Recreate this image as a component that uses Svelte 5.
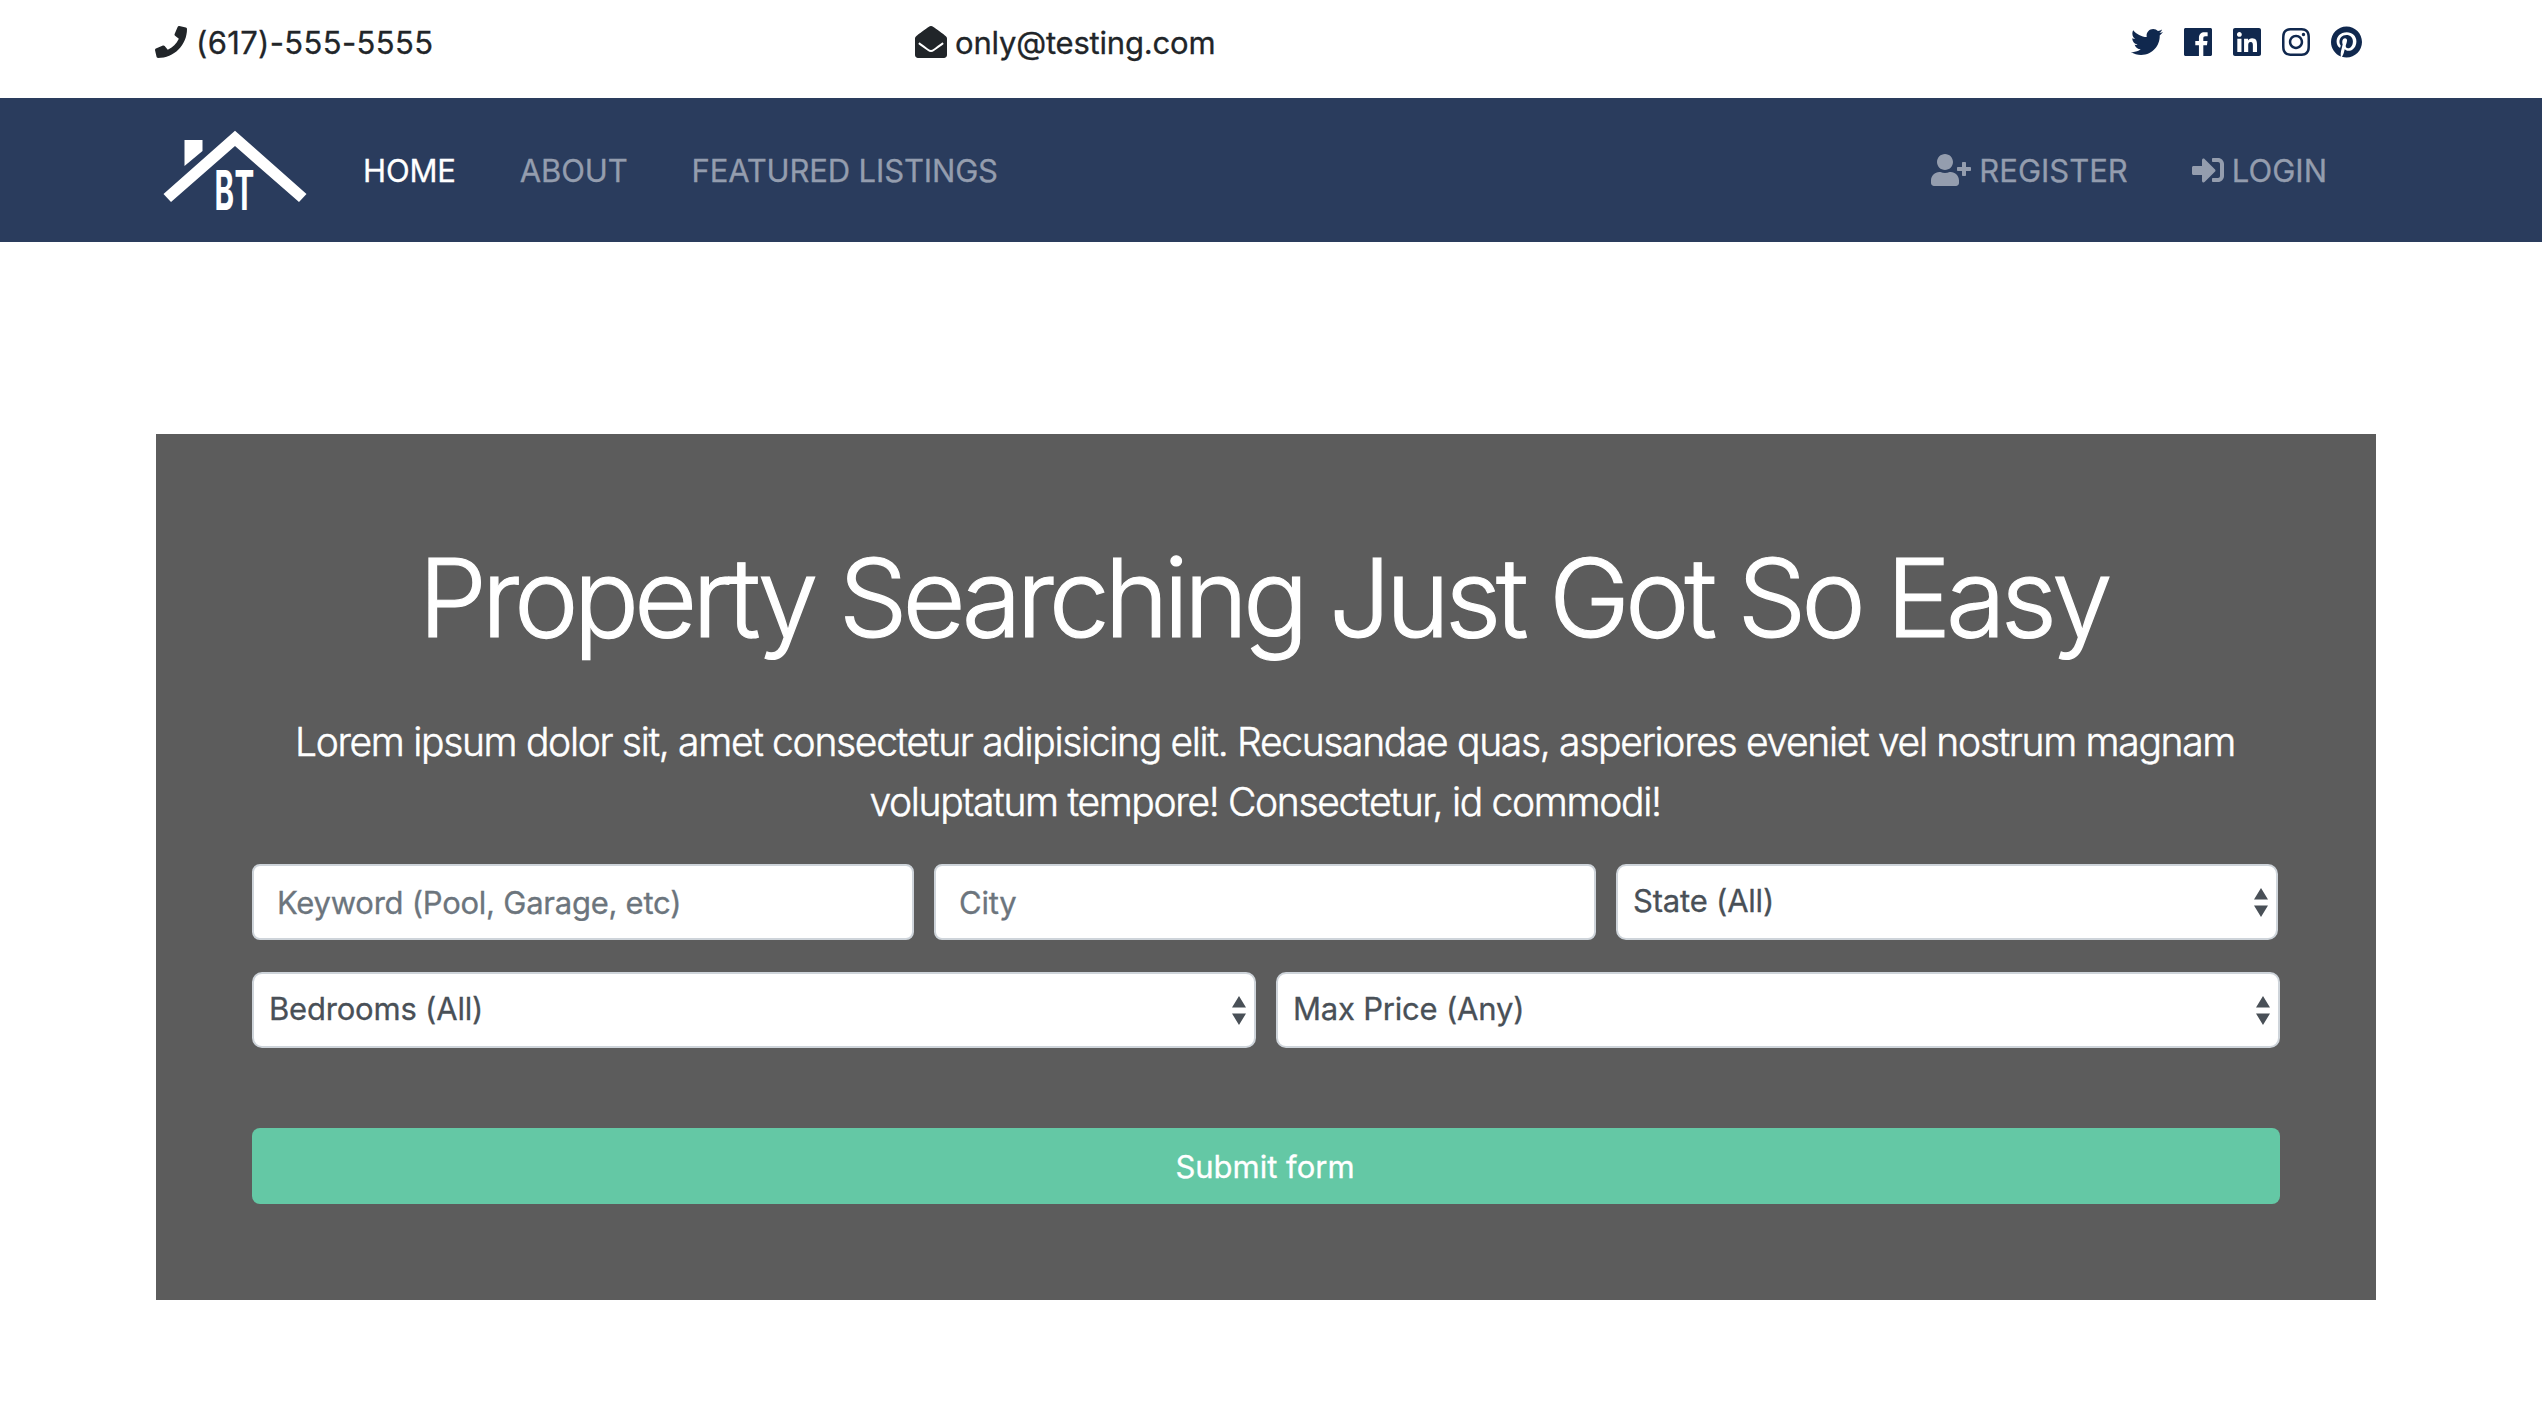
<script>
  const icons = {
    phone: { w: 512, d: 'M493.4 24.6l-104-24c-11.3-2.6-22.9 3.3-27.5 13.9l-48 112c-4.2 9.8-1.4 21.3 6.9 28l60.6 49.6c-36 76.7-98.9 140.5-177.2 177.2l-49.6-60.6c-6.8-8.3-18.2-11.1-28-6.9l-112 48C3.9 366.5-2 378.1.6 389.4l24 104C27.1 504.2 36.7 512 48 512c256.1 0 464-207.5 464-464 0-11.2-7.7-20.9-18.6-23.4z' },
    envelope: { w: 512, d: 'M512 464c0 26.51-21.49 48-48 48H48c-26.51 0-48-21.49-48-48V200.724a48 48 0 0 1 18.387-37.776c24.913-19.529 45.501-35.365 164.2-121.511C199.412 29.17 232.797-.347 256 .003c23.198-.354 56.596 29.172 73.413 41.433 118.687 86.137 139.303 101.995 164.2 121.512A48 48 0 0 1 512 200.724V464zm-65.666-196.605c-2.563-3.728-7.7-4.595-11.339-1.907-22.845 16.873-55.462 40.705-105.582 77.079-16.825 12.266-50.21 41.781-73.413 41.43-23.211.344-56.559-29.143-73.413-41.43-50.114-36.37-82.734-60.204-105.582-77.079-3.639-2.688-8.776-1.821-11.339 1.907l-9.072 13.196a7.998 7.998 0 0 0 1.839 10.967c22.887 16.899 55.454 40.69 105.303 76.868 20.274 14.781 56.524 47.813 92.264 47.573 35.724.242 71.961-32.771 92.263-47.573 49.85-36.179 82.418-59.97 105.303-76.868a7.998 7.998 0 0 0 1.839-10.967l-9.071-13.196z' },
    userPlus: { w: 640, d: 'M624 208h-64v-64c0-8.8-7.2-16-16-16h-32c-8.8 0-16 7.2-16 16v64h-64c-8.8 0-16 7.2-16 16v32c0 8.8 7.2 16 16 16h64v64c0 8.8 7.2 16 16 16h32c8.8 0 16-7.2 16-16v-64h64c8.8 0 16-7.2 16-16v-32c0-8.8-7.2-16-16-16zm-400 48c70.7 0 128-57.3 128-128S294.7 0 224 0 96 57.3 96 128s57.3 128 128 128zm89.6 32h-16.7c-22.2 10.2-46.9 16-72.9 16s-50.6-5.8-72.9-16h-16.7C60.2 288 0 348.2 0 422.4V464c0 26.5 21.5 48 48 48h352c26.5 0 48-21.5 48-48v-41.6c0-74.2-60.2-134.4-134.4-134.4z' },
    signIn: { w: 512, d: 'M416 448h-84c-6.6 0-12-5.4-12-12v-40c0-6.6 5.4-12 12-12h84c17.7 0 32-14.3 32-32V160c0-17.7-14.3-32-32-32h-84c-6.6 0-12-5.4-12-12V76c0-6.6 5.4-12 12-12h84c53 0 96 43 96 96v192c0 53-43 96-96 96zm-47-201L201 79c-15-15-41-4.5-41 17v96H24c-13.3 0-24 10.7-24 24v96c0 13.3 10.7 24 24 24h136v96c0 21.5 26 32 41 17l168-168c9.3-9.4 9.3-24.6 0-34z' }
  };

  const socials = [
    { name: 'Twitter', w: 512, d: 'M459.37 151.716c.325 4.548.325 9.097.325 13.645 0 138.72-105.583 298.558-298.558 298.558-59.452 0-114.68-17.219-161.137-47.106 8.447.974 16.568 1.299 25.34 1.299 49.055 0 94.213-16.568 130.274-44.832-46.132-.975-84.792-31.188-98.112-72.772 6.498.974 12.995 1.624 19.818 1.624 9.421 0 18.843-1.3 27.614-3.573-48.081-9.747-84.143-51.98-84.143-102.985v-1.299c13.969 7.797 30.214 12.67 47.431 13.319-28.264-18.843-46.781-51.005-46.781-87.391 0-19.492 5.197-37.36 14.294-52.954 51.655 63.675 129.3 105.258 216.365 109.807-1.624-7.797-2.599-15.918-2.599-24.04 0-57.828 46.782-104.934 104.934-104.934 30.213 0 57.502 12.67 76.67 33.137 23.715-4.548 46.456-13.32 66.599-25.34-7.798 24.366-24.366 44.833-46.132 57.827 21.117-2.273 41.584-8.122 60.426-16.243-14.292 20.791-32.161 39.308-52.628 54.253z' },
    { name: 'Facebook', w: 448, d: 'M448 56.7v398.5c0 13.7-11.1 24.7-24.7 24.7H309.1V306.5h58.2l8.7-67.6h-67v-43.2c0-19.6 5.4-32.9 33.5-32.9h35.8v-60.5c-6.2-.8-27.4-2.7-52.2-2.7-51.6 0-87 31.5-87 89.4v49.9h-58.4v67.6h58.4V480H24.7C11.1 480 0 468.9 0 455.3V56.7C0 43.1 11.1 32 24.7 32h398.5c13.7 0 24.8 11.1 24.8 24.7z' },
    { name: 'LinkedIn', w: 448, d: 'M416 32H31.9C14.3 32 0 46.5 0 64.3v383.4C0 465.5 14.3 480 31.9 480H416c17.6 0 32-14.5 32-32.3V64.3c0-17.8-14.4-32.3-32-32.3zM135.4 416H69V202.2h66.5V416zm-33.2-243c-21.3 0-38.5-17.3-38.5-38.5S80.9 96 102.2 96c21.2 0 38.5 17.3 38.5 38.5 0 21.3-17.2 38.5-38.5 38.5zm282.1 243h-66.4V312c0-24.8-.5-56.7-34.5-56.7-34.6 0-39.9 27-39.9 54.9V416h-66.4V202.2h63.7v29.2h.9c8.9-16.8 30.6-34.5 62.9-34.5 67.2 0 79.7 44.3 79.7 101.9V416z' },
    { name: 'Instagram', w: 448, d: 'M224.1 141c-63.6 0-114.9 51.3-114.9 114.9s51.3 114.9 114.9 114.9S339 319.5 339 255.9 287.7 141 224.1 141zm0 189.6c-41.1 0-74.7-33.5-74.7-74.7s33.5-74.7 74.7-74.7 74.7 33.5 74.7 74.7-33.6 74.7-74.7 74.7zm146.4-194.3c0 14.9-12 26.8-26.8 26.8-14.9 0-26.8-12-26.8-26.8s12-26.8 26.8-26.8 26.8 12 26.8 26.8zm76.1 27.2c-1.7-35.9-9.9-67.7-36.2-93.9-26.2-26.2-58-34.4-93.9-36.2-37-2.1-147.9-2.1-184.9 0-35.8 1.7-67.6 9.9-93.9 36.1s-34.4 58-36.2 93.9c-2.1 37-2.1 147.9 0 184.9 1.7 35.9 9.9 67.7 36.2 93.9s58 34.4 93.9 36.2c37 2.1 147.9 2.1 184.9 0 35.9-1.7 67.7-9.9 93.9-36.2 26.2-26.2 34.4-58 36.2-93.9 2.1-37 2.1-147.8 0-184.8zM398.8 388c-7.8 19.6-22.9 34.7-42.6 42.6-29.5 11.7-99.5 9-132.1 9s-102.7 2.6-132.1-9c-19.6-7.8-34.7-22.9-42.6-42.6-11.7-29.5-9-99.5-9-132.1s-2.6-102.7 9-132.1c7.8-19.6 22.9-34.7 42.6-42.6 29.5-11.7 99.5-9 132.1-9s102.7-2.6 132.1 9c19.6 7.8 34.7 22.9 42.6 42.6 11.7 29.5 9 99.5 9 132.1s2.7 102.7-9 132.1z' },
    { name: 'Pinterest', w: 496, d: 'M496 256c0 137-111 248-248 248-25.6 0-50.2-3.9-73.4-11.1 10.1-16.5 25.2-43.5 30.8-65 3-11.6 15.4-59 15.4-59 8.1 15.4 31.7 28.5 56.8 28.5 74.8 0 128.7-68.8 128.7-154.3 0-81.9-66.9-143.2-152.9-143.2-107 0-163.9 71.8-163.9 150.1 0 36.4 19.4 81.7 50.3 96.1 4.7 2.2 7.2 1.2 8.3-3.3.8-3.4 5-20.3 6.9-28.1.6-2.5.3-4.7-1.7-7.1-10.1-12.5-18.3-35.3-18.3-56.6 0-54.7 41.4-107.6 112-107.6 60.9 0 103.6 41.5 103.6 100.9 0 67.1-33.9 113.6-78 113.6-24.3 0-42.6-20.1-36.7-44.8 7-29.5 20.5-61.3 20.5-82.6 0-19-10.2-34.9-31.4-34.9-24.9 0-44.9 25.7-44.9 60.2 0 22 7.4 36.8 7.4 36.8s-24.5 103.8-29 123.2c-5 21.4-3 51.6-.9 71.2C65.4 450.9 0 361.1 0 256 0 119 111 8 248 8s248 111 248 248z' }
  ];
</script>

{#snippet icon(item)}
  <svg class="icon" width={item.w / 16} height="32" viewBox="0 0 {item.w} 512" aria-hidden="true"><path d={item.d} /></svg>
{/snippet}

{#snippet picker(label)}
  <button type="button" class="field select">
    <span>{label}</span>
    <svg width="14" height="29" viewBox="0 0 14 29" aria-hidden="true"><path d="M0 11.5L7 0l7 11.5zM0 17.5h14L7 29z" /></svg>
  </button>
{/snippet}

<header class="topbar">
  <div class="contact phone">{@render icon(icons.phone)}<span>(617)-555-5555</span></div>
  <div class="contact email">{@render icon(icons.envelope)}<span>only@testing.com</span></div>
  <div class="social">
    {#each socials as s (s.name)}
      <a href="#top" aria-label={s.name}>{@render icon(s)}</a>
    {/each}
  </div>
</header>

<nav class="navbar">
  <a class="brand" href="#top" aria-label="BT">
    <svg width="146" height="82" viewBox="0 0 146 82">
      <path d="M1.5 64L73 .8 144.500 64l-7.500 8L73 16 9 72z" />
      <path d="M22.500 10h18v11L22.500 36z" />
      <text x="52.500" y="80" textLength="42" lengthAdjust="spacingAndGlyphs">BT</text>
    </svg>
  </a>
  <a class="link home" href="#top">HOME</a>
  <a class="link about" href="#top">ABOUT</a>
  <a class="link listings" href="#top">FEATURED LISTINGS</a>
  <div class="account">
    <a class="link register" href="#top">{@render icon(icons.userPlus)}<span>REGISTER</span></a>
    <a class="link login" href="#top">{@render icon(icons.signIn)}<span>LOGIN</span></a>
  </div>
</nav>

<main class="showcase">
  <h1>Property Searching Just Got So Easy</h1>
  <p>
    Lorem ipsum dolor sit, amet consectetur adipisicing elit. Recusandae quas, asperiores eveniet vel nostrum magnam<br />
    voluptatum tempore! Consectetur, id commodi!
  </p>
  <form onsubmit={(e) => e.preventDefault()}>
    <div class="row three">
      <input class="field" type="text" placeholder="Keyword (Pool, Garage, etc)" />
      <input class="field" type="text" placeholder="City" />
      {@render picker('State (All)')}
    </div>
    <div class="row two">
      {@render picker('Bedrooms (All)')}
      {@render picker('Max Price (Any)')}
    </div>
    <button class="submit" type="submit">Submit form</button>
  </form>
</main>

<style>
  :global(body) {
    background: #fff;
    color: #212529;
    font-family: Inter, 'Liberation Sans', sans-serif;
    font-size: 31px;
    -webkit-text-stroke: 0.3px currentColor;
  }
  a {
    color: inherit;
    text-decoration: none;
  }
  svg {
    display: block;
    flex: none;
    fill: currentColor;
  }
  .topbar {
    box-sizing: border-box;
    display: grid;
    grid-template-columns: 760px 1fr auto;
    height: 98px;
    padding: 0 180px 14px 155px;
    align-items: center;
  }
  .contact {
    display: flex;
    align-items: center;
    line-height: 48px;
  }
  .contact span {
    margin: 2px 0 0 8px;
  }
  .phone span {
    margin-left: 9px;
    letter-spacing: 0.35px;
  }
  .email span {
    letter-spacing: -0.2px;
  }
  .social {
    display: flex;
    gap: 21px;
    color: #10284e;
  }
  .navbar {
    box-sizing: border-box;
    display: flex;
    align-items: center;
    height: 144px;
    padding: 2px 215px 0 162px;
    background: #2a3c5d;
    color: #949dae;
  }
  .brand {
    margin-right: 55px;
    color: #fff;
  }
  .brand svg {
    overflow: visible;
  }
  .brand text {
    font: 700 55px Inter, sans-serif;
    letter-spacing: 4px;
    -webkit-text-stroke: 0;
  }
  .link {
    display: flex;
    align-items: center;
    margin-right: 64px;
    line-height: 48px;
    letter-spacing: -0.15px;
  }
  .link svg {
    margin-bottom: 2px;
  }
  .home {
    color: #fff;
  }
  .account {
    display: flex;
    margin-left: auto;
  }
  .account span {
    margin-left: 8px;
    letter-spacing: 0;
  }
  .login {
    margin-right: 0;
  }
  .showcase {
    box-sizing: border-box;
    width: 2220px;
    height: 866px;
    margin: 192px 0 0 156px;
    padding: 96px;
    background: #5c5c5c;
    color: #fff;
    text-align: center;
  }
  h1 {
    margin: 0;
    padding-right: 6px;
    font-size: 109px;
    font-weight: 300;
    line-height: 134px;
    letter-spacing: -5.1px;
    white-space: nowrap;
    -webkit-text-stroke-width: 1.2px;
  }
  p {
    margin: 48px 0 32px;
    padding-right: 2px;
    font-size: 39px;
    font-weight: 300;
    line-height: 60px;
    letter-spacing: -1.32px;
    white-space: nowrap;
    -webkit-text-stroke-width: 0.5px;
  }
  .row {
    display: grid;
    gap: 20px;
    margin-bottom: 32px;
  }
  .three {
    grid-template-columns: repeat(3, 662px);
  }
  .two {
    grid-template-columns: repeat(2, 1004px);
  }
  .field {
    box-sizing: border-box;
    width: 100%;
    height: 76px;
    padding: 0 23px;
    border: 2px solid #ced4da;
    border-radius: 8px;
    background: #fff;
    color: #495057;
    font: inherit;
    letter-spacing: -0.25px;
  }
  .field::placeholder {
    color: #6c757d;
    opacity: 1;
  }
  .select {
    display: flex;
    align-items: center;
    justify-content: space-between;
    padding: 0 8px 0 15px;
    border-radius: 10px;
    letter-spacing: -0.2px;
  }
  .select span {
    padding-bottom: 4px;
  }
  .submit {
    display: block;
    width: 100%;
    height: 76px;
    margin-top: 80px;
    padding: 0 2px 0 0;
    border: 0;
    border-radius: 8px;
    background: #64c8a5;
    color: #fff;
    font: inherit;
  }
</style>
